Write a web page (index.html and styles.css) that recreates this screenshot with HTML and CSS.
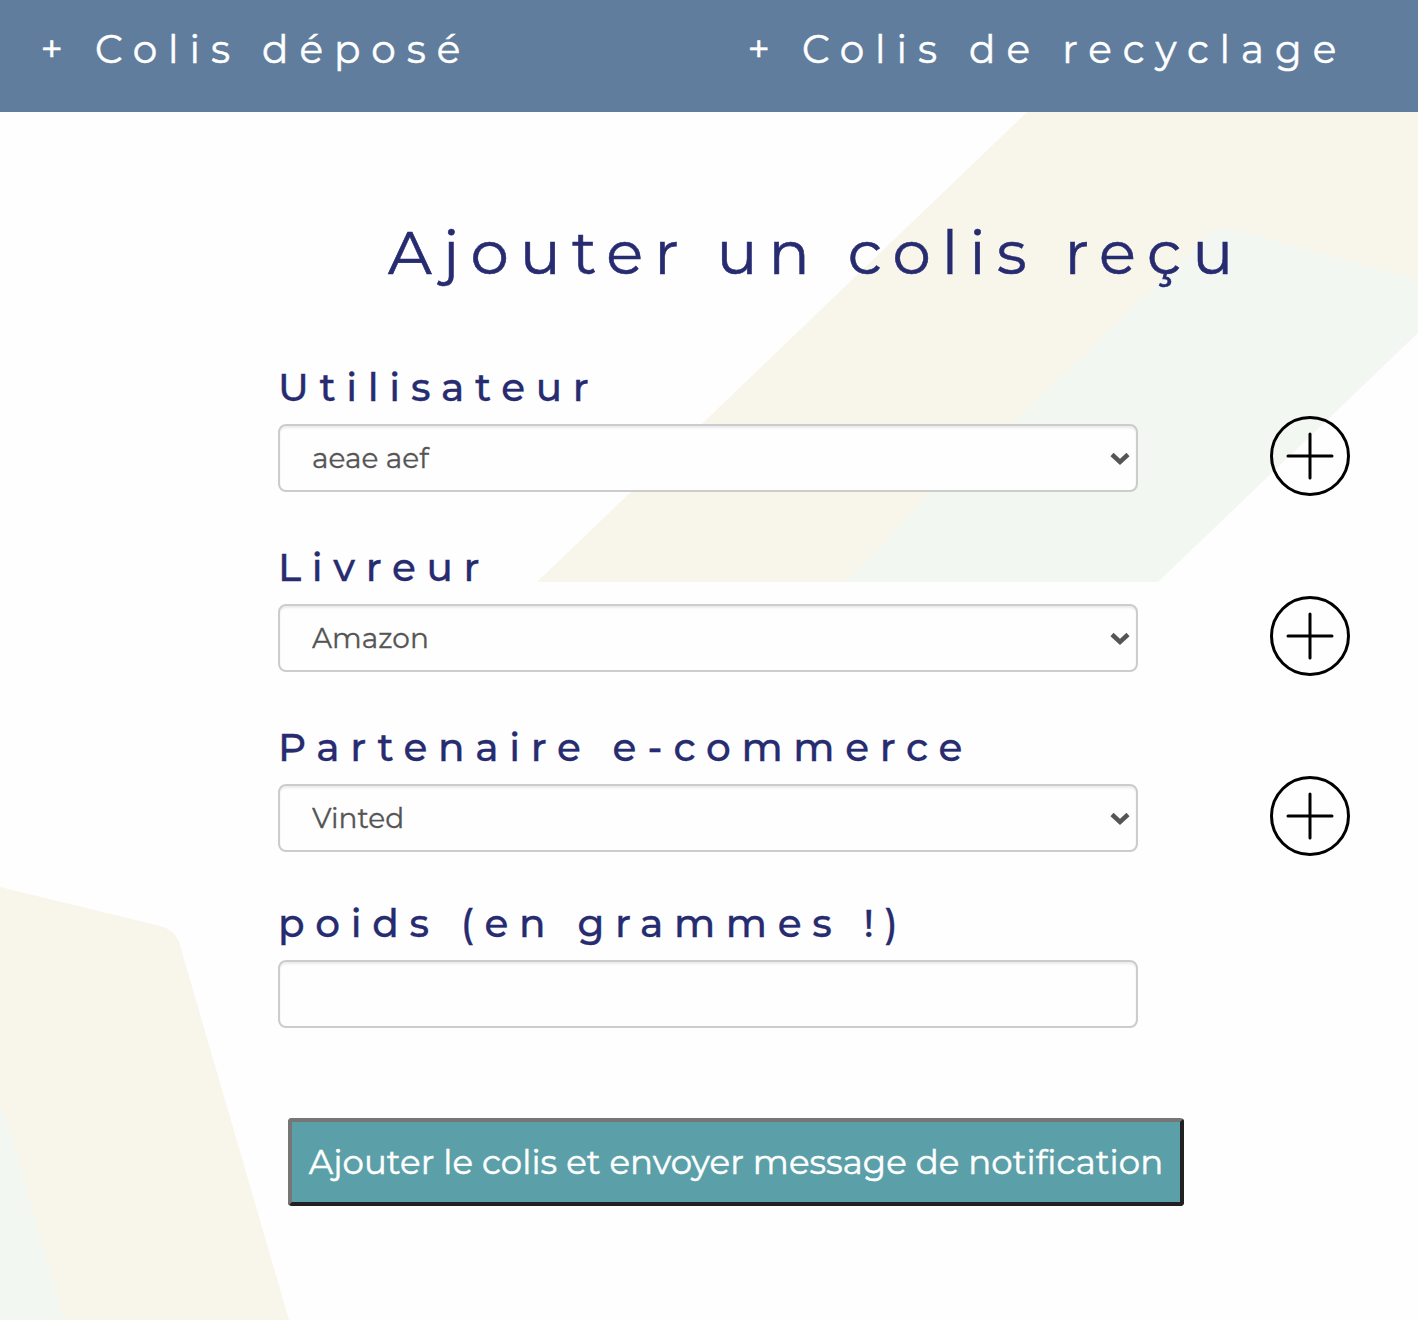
FILE: index.html
```html
<!DOCTYPE html>
<html lang="fr">
<head>
<meta charset="utf-8">
<title>Ajouter un colis reçu</title>
<link rel="stylesheet" href="styles.css">
</head>
<body>
<svg class="backdrop" viewBox="0 0 1418 1320" aria-hidden="true">
  <path fill="#f8f5ea" d="M1027 112H1418V582H537Z"/>
  <path fill="#f2f7f2" d="M846 582L932 492L1013 424L1208 235Q1218 225 1233 229L1418 280V333L1158 582Z"/>
  <path fill="#fefefe" d="M1418 333V583H1157Z"/>
  <path fill="#f8f5ea" d="M0 887L160 926Q174 929 179 942L289 1320H0Z"/>
  <path fill="#f2f7f2" d="M0 1104Q12 1135 20 1167L64 1320H0Z"/>
</svg>
<nav class="tabs">
  <a class="tab">+ Colis déposé</a>
  <a class="tab">+ Colis de recyclage</a>
</nav>
<main class="page">
  <h1 class="title">Ajouter un colis reçu</h1>
  <form class="form">
    <div class="row">
      <div class="field">
        <label class="label" for="user">Utilisateur</label>
        <div class="control"><select class="input" id="user"><option>aeae aef</option></select><svg class="chevron" viewBox="0 0 20 14"><path d="M2 2.5L10 10L18 2.5"/></svg></div>
      </div>
      <svg class="add" viewBox="0 0 80 80"><circle cx="40" cy="40" r="38.5"/><path d="M18 40H62M40 18V62"/></svg>
    </div>
    <div class="row">
      <div class="field">
        <label class="label" for="carrier">Livreur</label>
        <div class="control"><select class="input" id="carrier"><option>Amazon</option></select><svg class="chevron" viewBox="0 0 20 14"><path d="M2 2.5L10 10L18 2.5"/></svg></div>
      </div>
      <svg class="add" viewBox="0 0 80 80"><circle cx="40" cy="40" r="38.5"/><path d="M18 40H62M40 18V62"/></svg>
    </div>
    <div class="row">
      <div class="field">
        <label class="label" for="partner">Partenaire e-commerce</label>
        <div class="control"><select class="input" id="partner"><option>Vinted</option></select><svg class="chevron" viewBox="0 0 20 14"><path d="M2 2.5L10 10L18 2.5"/></svg></div>
      </div>
      <svg class="add" viewBox="0 0 80 80"><circle cx="40" cy="40" r="38.5"/><path d="M18 40H62M40 18V62"/></svg>
    </div>
    <div class="row row-weight">
      <div class="field">
        <label class="label" for="weight">poids (en grammes !)</label>
        <div class="control"><input class="input" id="weight" type="text"></div>
      </div>
    </div>
    <button class="submit" type="button">Ajouter le colis et envoyer message de notification</button>
  </form>
</main>
</body>
</html>
```
FILE: styles.css
```css
* { box-sizing: border-box; }
body {
  margin: 0;
  height: 1320px;
  overflow: hidden;
  background: #fefefe;
  font-family: Montserrat, Inter, sans-serif;
  position: relative;
}
.backdrop {
  position: absolute;
  inset: 0;
  width: 1418px;
  height: 1320px;
  z-index: -1;
}
.tabs {
  display: grid;
  grid-template-columns: 707px 1fr;
  height: 112px;
  padding-top: 20px;
  background: #607d9d;
}
.tab {
  padding-left: 40.4px;
  color: #fff;
  font-size: 39px;
  line-height: 58px;
  letter-spacing: 10.95px;
  white-space: nowrap;
  -webkit-text-stroke: .5px;
}
.title {
  margin: 0;
  padding: 103px 0 1px 388px;
  color: #272b70;
  font-size: 61px;
  font-weight: 400;
  line-height: 74px;
  letter-spacing: 11px;
  white-space: nowrap;
  -webkit-text-stroke: .6px;
}
.form { padding: 64px 0 0 278px; }
.row {
  display: flex;
  justify-content: space-between;
  align-items: flex-end;
  width: 1072px;
  height: 138px;
  margin-bottom: 42px;
}
.row-weight { height: 134px; margin-bottom: 90px; }
.field { width: 860px; }
.label {
  display: block;
  height: 66px;
  color: #272b70;
  font-size: 39px;
  font-weight: 500;
  line-height: 58px;
  letter-spacing: 10.65px;
  white-space: nowrap;
  -webkit-text-stroke: .3px;
}
.control { position: relative; height: 68px; }
.input {
  display: block;
  width: 100%;
  height: 68px;
  padding: 0 32px;
  border: 2px solid #ccc;
  border-radius: 8px;
  background: #fefefe;
  box-shadow: inset 0 2px 2px rgba(0, 0, 0, .075);
  color: #555;
  font: 400 28px Montserrat, Inter, sans-serif;
  -webkit-text-stroke: .3px;
  appearance: none;
}
.chevron {
  position: absolute;
  right: 8px;
  top: 28px;
  width: 20px;
  height: 14px;
  fill: none;
  stroke: #555;
  stroke-width: 4.5;
}
.add {
  width: 80px;
  height: 80px;
  margin-bottom: -4px;
  fill: none;
  stroke: #000;
  stroke-width: 3;
  stroke-linecap: round;
}
.submit {
  display: block;
  width: 896px;
  height: 88px;
  margin-left: 10px;
  padding: 0;
  border: 4px solid;
  border-color: #767676 #212121 #212121 #767676;
  border-radius: 4px;
  background: #5b9fa8;
  color: #fff;
  font: 400 34px Montserrat, Inter, sans-serif;
  letter-spacing: .04px;
  white-space: nowrap;
  -webkit-text-stroke: .5px;
}
```
